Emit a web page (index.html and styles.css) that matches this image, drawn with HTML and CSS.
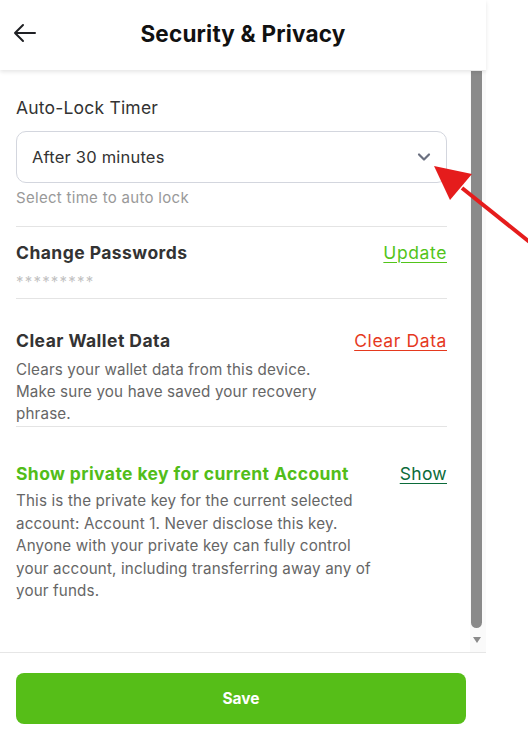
FILE: index.html
```html
<!DOCTYPE html>
<html>
<head>
<meta charset="utf-8">
<link rel="stylesheet" href="styles.css">
</head>
<body>
<div class="app">
  <header class="header">
    <svg class="back" width="24" height="24" viewBox="0 0 24 24"><path d="M22 12H2M10 4L2 12l8 8" fill="none" stroke="#1f2024" stroke-width="2" stroke-linecap="round" stroke-linejoin="round"/></svg>
    <h1 class="title">Security &amp; Privacy</h1>
  </header>
  <div class="main">
    <div class="content">
      <div class="label">Auto-Lock Timer</div>
      <div class="select">
        <span>After 30 minutes</span>
        <svg width="14" height="10" viewBox="0 0 14 10"><path d="M2 2.5l5 5 5-5" fill="none" stroke="#6b7080" stroke-width="2.2" stroke-linecap="round" stroke-linejoin="round"/></svg>
      </div>
      <div class="hint">Select time to auto lock</div>
      <div class="divider d1"></div>
      <div class="row r1">
        <span class="rtitle">Change Passwords</span>
        <a class="link green">Update</a>
      </div>
      <div class="stars">*********</div>
      <div class="divider d2"></div>
      <div class="row r2">
        <span class="rtitle">Clear Wallet Data</span>
        <a class="link red">Clear Data</a>
      </div>
      <p class="desc narrow">Clears your wallet data from this device. Make sure you have saved your recovery phrase.</p>
      <div class="divider d3"></div>
      <div class="row r3">
        <span class="rtitle gtitle">Show private key for current Account</span>
        <a class="link dgreen">Show</a>
      </div>
      <p class="desc wide">This is the private key for the current selected account: Account 1. Never disclose this key. Anyone with your private key can fully control your account, including transferring away any of your funds.</p>
    </div>
    <div class="scrollbar">
      <div class="thumb"></div>
      <div class="down"></div>
    </div>
  </div>
  <footer class="footer">
    <button class="save">Save</button>
  </footer>
</div>
<svg class="annot" width="110" height="90" viewBox="0 0 110 90">
  <line x1="108" y1="86" x2="28" y2="22" stroke="#e51c1c" stroke-width="4"/>
  <polygon points="0,0 38,8 16,34" fill="#e51c1c"/>
</svg>
</body>
</html>
```
FILE: styles.css
```css
* { box-sizing: border-box; }
html, body { margin: 0; padding: 0; background: #fff; }
body {
  width: 528px;
  height: 742px;
  font-family: "Inter", "Open Sans", sans-serif;
  color: #333;
  position: relative;
  overflow: hidden;
}
.app {
  width: 486px;
  height: 742px;
  display: flex;
  flex-direction: column;
}
.header {
  height: 70px;
  flex: none;
  display: flex;
  align-items: center;
  justify-content: center;
  position: relative;
  box-shadow: 0 2px 4px rgba(0,0,0,0.10);
  z-index: 1;
}
.back { position: absolute; left: 13px; top: 21px; }
.title {
  margin: 0 0 3px;
  font-size: 22.5px;
  font-weight: 700;
  color: #111;
  letter-spacing: 0.2px;
}
.main {
  height: 583px;
  flex: none;
  display: flex;
  border-bottom: 1px solid #e6e6e6;
}
.content {
  flex: 1;
  padding: 26px 23px 0 16px;
}
.label { font-size: 17.5px; line-height: 24px; color: #333; letter-spacing: 0.2px; }
.select {
  margin-top: 11px;
  height: 52px;
  border: 1px solid #d3d6de;
  border-radius: 10px;
  display: flex;
  align-items: center;
  justify-content: space-between;
  padding: 0 15px 0 15px;
  font-size: 16.5px;
  letter-spacing: 0.2px;
  color: #333;
}
.hint { margin-top: 5px; font-size: 15px; line-height: 20px; color: #999; letter-spacing: 0.3px; }
.divider { height: 1px; background: #e4e4e4; }
.d1 { margin-top: 18px; }
.d2 { margin-top: 6px; }
.d3 { margin-top: 1px; }
.row {
  display: flex;
  justify-content: space-between;
  align-items: center;
  height: 24px;
}
.r1 { margin-top: 13px; }
.r2 { margin-top: 29px; }
.r3 { margin-top: 34px; }
.rtitle { font-size: 17.5px; font-weight: 700; color: #333; letter-spacing: 0.45px; }
.gtitle { color: #52bd19; letter-spacing: 0.4px; }
.link { font-size: 17.5px; letter-spacing: 0.6px; text-decoration: underline; text-underline-offset: 3px; text-decoration-thickness: 1px; }
.green { color: #52c41a; }
.red { color: #e5391e; }
.dgreen { color: #0b6b3a; letter-spacing: 0.3px; }
.stars { margin-top: 8px; font-size: 15px; line-height: 20px; color: #c2c2c2; letter-spacing: 1.2px; }
.desc { margin: 7px 0 0; font-size: 15.2px; line-height: 22px; color: #666; letter-spacing: 0.15px; }
.narrow { max-width: 330px; height: 66px; }
.wide { max-width: 364px; margin-top: 5px; line-height: 22.6px; }
.scrollbar {
  width: 16px;
  flex: none;
  background: #fafafa;
  display: flex;
  flex-direction: column;
  align-items: flex-start;
  padding-top: 1px;
}
.thumb {
  width: 11px;
  margin-left: 1px;
  height: 557px;
  background: #8a8a8a;
  border-radius: 0 0 6px 6px;
}
.down {
  margin-top: 9px;
  margin-left: 3px;
  width: 0; height: 0;
  border-left: 4px solid transparent;
  border-right: 4px solid transparent;
  border-top: 6px solid #8a8a8a;
}
.footer { padding: 20px 20px 0 16px; }
.save {
  width: 100%;
  height: 51px;
  border: none;
  border-radius: 8px;
  background: #56be18;
  color: #fff;
  font-family: inherit;
  font-size: 15.5px;
  font-weight: 700;
}
.annot { position: absolute; left: 434px; top: 166px; }
```
